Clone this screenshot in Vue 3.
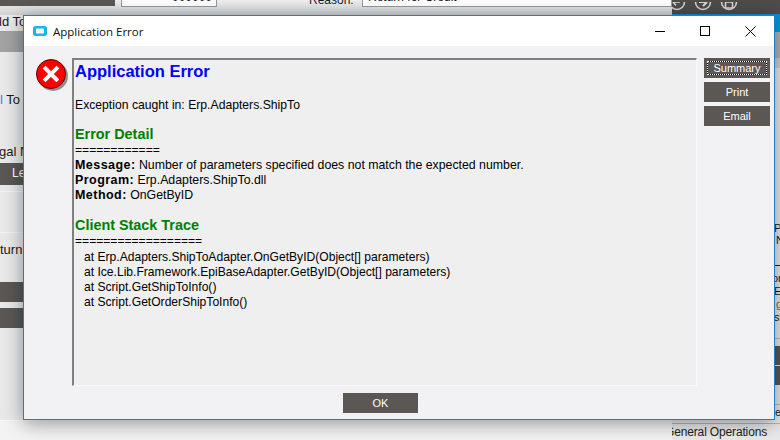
<script setup>
const buttons = [
  { label: 'Summary', focused: true },
  { label: 'Print', focused: false },
  { label: 'Email', focused: false },
]
const details = [
  { key: 'Message:', value: 'Number of parameters specified does not match the expected number.' },
  { key: 'Program:', value: 'Erp.Adapters.ShipTo.dll' },
  { key: 'Method:', value: 'OnGetByID' },
]
const stack = [
  'at Erp.Adapters.ShipToAdapter.OnGetByID(Object[] parameters)',
  'at Ice.Lib.Framework.EpiBaseAdapter.GetByID(Object[] parameters)',
  'at Script.GetShipToInfo()',
  'at Script.GetOrderShipToInfo()',
]
</script>

<template>
  <div class="desktop">
    <div class="scrap top-bar">
      <span class="scrap top-label">Order Number:</span>
      <span class="scrap top-input">000000</span>
      <span class="scrap top-reason">Reason:</span>
      <span class="scrap top-select">Return for Credit</span>
    </div>
    <div class="scrap tools">
      <svg width="93" height="12" viewBox="0 0 93 12" fill="none" stroke="#d8d8d8" stroke-width="1.5">
        <circle cx="5" cy="0" r="7.500" />
        <path d="M1 0h7M4 3.500 1 0" />
        <circle cx="31" cy="0" r="7.500" />
        <path d="M27 0h8M31 4l4-4" stroke-width="2" />
        <circle cx="57" cy="0" r="7.500" />
        <path d="M53.500 6V0h7v6z" />
      </svg>
    </div>
    <div class="scrap edge-blue"></div>
    <div class="scrap edge-gray"></div>
    <div class="scrap edge-gray-lite"></div>

    <span class="scrap txt t-ldto">ld To</span>
    <div class="scrap band-gray"></div>
    <span class="scrap txt t-lto"><b class="tick">l</b> To</span>
    <span class="scrap txt t-gal">gal N</span>
    <div class="scrap band-dark b1"><span class="t-le">Le</span></div>
    <div class="scrap rule r1"></div>
    <div class="scrap rule r2"></div>
    <span class="scrap txt t-turn">turn</span>
    <div class="scrap band-dark b2"></div>
    <div class="scrap band-dark b3"></div>
    <div class="scrap rule r3"></div>

    <span class="scrap txt t-r1">Pr</span>
    <span class="scrap txt t-r2">N</span>
    <div class="scrap rule r4"></div>
    <span class="scrap txt t-r3">or</span>
    <span class="scrap txt t-r4">Er</span>
    <span class="scrap txt t-r5">g</span>
    <span class="scrap txt t-r6">sf</span>
    <div class="scrap rule r5"></div>
    <div class="scrap band-dark b4"></div>
    <div class="scrap band-dark b5"></div>
    <div class="scrap rule r6"></div>
    <span class="scrap txt t-r7">e</span>
    <div class="scrap rule r7"></div>
    <span class="scrap txt t-ops">General Operations</span>
    <div class="scrap bottom-left"></div>

    <section class="window">
      <header class="titlebar">
        <svg class="app-icon" width="14" height="10" viewBox="0 0 14 10">
          <rect width="14" height="10" rx="2.500" fill="#1fb4e8" />
          <rect x="3" y="2.500" width="8" height="5" rx="1" fill="#fff" />
        </svg>
        <span class="title">Application Error</span>
        <div class="controls">
          <svg width="10" height="10" viewBox="0 0 10 10"><path d="M0 5.500h10" stroke="#000" /></svg>
          <svg width="10" height="10" viewBox="0 0 10 10"><rect x=".5" y=".5" width="9" height="9" fill="none" stroke="#000" /></svg>
          <svg width="11" height="11" viewBox="0 0 11 11"><path d="M.5.500l10 10M10.500.5l-10 10" stroke="#000" fill="none" /></svg>
        </div>
      </header>

      <div class="body">
        <svg class="err-icon" width="36" height="36" viewBox="0 0 36 36">
          <circle cx="19" cy="19" r="15" fill="#8f8f8f" />
          <circle cx="17" cy="17" r="14.500" fill="#f00" stroke="#5c0000" />
          <path d="M11.500 11.500l11 11M22.500 11.500l-11 11" stroke="#fff" stroke-width="4" stroke-linecap="square" fill="none" />
        </svg>

        <article class="panel">
          <h1>Application Error</h1>
          <p class="exception">Exception caught in: Erp.Adapters.ShipTo</p>
          <h2>Error Detail</h2>
          <p>============</p>
          <p v-for="d in details" :key="d.key"><strong>{{ d.key }}</strong> <span class="val">{{ d.value }}</span></p>
          <h2 class="second">Client Stack Trace</h2>
          <p class="rule-text">==================</p>
          <p v-for="s in stack" :key="s" class="frame">{{ s }}</p>
        </article>

        <div class="side">
          <button v-for="b in buttons" :key="b.label" class="btn side-btn">
            <span :class="{ focus: b.focused }">{{ b.label }}</span>
          </button>
        </div>
      </div>

      <footer class="foot">
        <button class="btn ok">OK</button>
      </footer>
    </section>
  </div>
</template>

<style>
html, body { margin: 0; padding: 0; }
</style>

<style scoped>
.desktop {
  position: relative;
  width: 780px;
  height: 440px;
  overflow: hidden;
  background: #e9e9e9;
  font-family: "Liberation Sans", Arial, sans-serif;
}
.scrap { position: absolute; display: block; }
.top-bar { left: 0; top: 0; width: 672px; height: 15px; background: linear-gradient(#f0f0f0, #d2d2d2); overflow: hidden; }
.top-label { left: 0; top: -6px; width: 115px; height: 12px; background: #5a5754; color: #fff; font-size: 12px; line-height: 4px; letter-spacing: .3px; padding-left: 13px; box-sizing: border-box; overflow: hidden; white-space: nowrap; }
.top-input { left: 121px; top: -6px; width: 96px; height: 13px; box-sizing: border-box; background: #fff; border: 1px solid #999; font-size: 12px; line-height: 4px; text-align: right; padding-right: 4px; color: #111; overflow: hidden; }
.top-reason { left: 309px; top: -7px; font-size: 12px; line-height: 14px; color: #1a1a2e; }
.top-select { left: 362px; top: -6px; width: 310px; height: 13px; box-sizing: border-box; background: #fff; border: 1px solid #999; padding-left: 5px; font-size: 12px; line-height: 4px; color: #1a1a2e; overflow: hidden; }
.tools { left: 672px; top: 0; width: 108px; height: 15px; box-sizing: border-box; background: #4f4d4b; border-bottom: 1px solid #0a8fd8; }
.edge-blue { left: 775px; top: 15px; width: 5px; height: 17px; background: linear-gradient(#0a8fd8, #00a2e0); }
.edge-gray { left: 775px; top: 32px; width: 5px; height: 26px; background: #b4b4b4; }
.edge-gray-lite { left: 775px; top: 58px; width: 5px; height: 10px; background: #cfcfcf; }

.txt { font-size: 12px; line-height: 14px; color: #1a1a1a; white-space: nowrap; }
.t-ldto { left: -1px; top: 15px; font-size: 13px; }
.band-gray { left: 0; top: 31px; width: 23px; height: 21px; background: #a2a2a2; }
.t-lto { left: 0; top: 93px; font-size: 13px; }
.tick { color: #1a8fdc; font-weight: 400; }
.t-gal { left: -1px; top: 145px; font-weight: 400; font-size: 13px; }
.band-dark { background: #5a5754; }
.b1 { left: 0; top: 163px; width: 23px; height: 22px; overflow: hidden; }
.t-le { position: absolute; left: 12px; top: 3px; color: #fff; font-size: 12px; line-height: 14px; }
.rule { height: 1px; background: #f5f5f5; }
.r1 { left: 0; top: 191px; width: 23px; }
.r2 { left: 0; top: 232px; width: 23px; }
.t-turn { left: 0; top: 243px; font-size: 13px; }
.b2 { left: 0; top: 282px; width: 23px; height: 20px; }
.b3 { left: 0; top: 308px; width: 23px; height: 20px; }
.r3 { left: 0; top: 420px; width: 672px; background: #f7f7f7; }
.t-r1 { left: 774px; top: 221px; font-size: 11px; }
.t-r2 { left: 776px; top: 233px; font-size: 11px; }
.r4 { left: 775px; top: 265px; width: 5px; background: #222; }
.t-r3 { left: 772px; top: 271px; font-size: 11px; }
.t-r4 { left: 774px; top: 284px; font-size: 11px; }
.t-r5 { left: 776px; top: 297px; font-size: 11px; color: #a06a10; }
.t-r6 { left: 774px; top: 310px; font-size: 11px; }
.r5 { left: 775px; top: 338px; width: 5px; background: #bbb; }
.b4 { left: 775px; top: 346px; width: 5px; height: 19px; }
.b5 { left: 775px; top: 366px; width: 5px; height: 19px; }
.r6 { left: 775px; top: 404px; width: 5px; background: #bbb; }
.t-r7 { left: 775px; top: 405px; font-size: 11px; }
.r7 { left: 672px; top: 423px; width: 108px; background: #b5b5b5; }
.t-ops { left: 665px; top: 425px; font-size: 12px; letter-spacing: -.15px; color: #222; }
.bottom-left { left: 0; top: 421px; width: 672px; height: 19px; background: #f3f3f4; }

.window {
  position: absolute;
  left: 23px;
  top: 15px;
  width: 752px;
  height: 405px;
  box-sizing: border-box;
  display: flex;
  flex-direction: column;
  background: #f2f2f4;
  border: 1px solid #1a7fd0;
  box-shadow: 0 3px 18px rgba(0, 0, 0, .4);
}
.titlebar {
  display: flex;
  align-items: center;
  height: 30px;
  background: #fff;
  padding-left: 9px;
  flex: none;
}
.app-icon { flex: none; margin-right: 6px; }
.title { font-family: "Open Sans", sans-serif; font-size: 11.500px; color: #111; }
.controls {
  margin-left: auto;
  display: flex;
  align-items: center;
  gap: 35px;
  margin-right: 18px;
}
.body {
  display: flex;
  align-items: flex-start;
  padding-top: 12px;
  flex: none;
  height: 328px;
}
.err-icon { flex: none; margin: -1px 2px 0 10px; }
.panel {
  box-sizing: border-box;
  width: 625px;
  height: 328px;
  padding: 1px 1px;
  background: #efefef;
  border-top: 2px solid #808080;
  border-left: 2px solid #808080;
  border-right: 1px solid #fafafa;
  border-bottom: 1px solid #fafafa;
  font-size: 12.100px;
  line-height: 15px;
  color: #000;
  flex: none;
}
h1 { margin: 0; font-size: 16.500px; line-height: 20px; font-weight: 700; color: #0000ff; }
h2 { margin: 0; font-size: 14.400px; line-height: 16px; font-weight: 700; color: #008000; }
h2 + p { margin-top: 1px; }
h2.second { margin-top: 14px; }
p { margin: 0; white-space: nowrap; }
strong { font-size: 12.500px; letter-spacing: .45px; }
.val { font-size: 12.320px; }
.exception { margin: 17px 0 13px; font-size: 12.200px; }
.rule-text { margin-bottom: 1px; }
.frame { padding-left: 9px; }
.side {
  display: flex;
  flex-direction: column;
  gap: 4px;
  margin-left: 7px;
}
.btn {
  display: flex;
  align-items: center;
  justify-content: center;
  padding: 0;
  border: 0;
  background: #5a5754;
  color: #fff;
  font-family: "Liberation Sans", Arial, sans-serif;
  font-size: 11px;
}
.side-btn { width: 66px; height: 20px; }
.focus {
  box-sizing: border-box;
  width: 60px;
  height: 14px;
  line-height: 12px;
  border: 1px dotted #fff;
  background: linear-gradient(#5a5754, #5a5754) padding-box, #000 border-box;
}
.foot {
  flex: 1;
  display: flex;
  align-items: flex-start;
  padding-top: 7px;
  padding-left: 319px;
}
.ok { width: 75px; height: 20px; }
</style>
